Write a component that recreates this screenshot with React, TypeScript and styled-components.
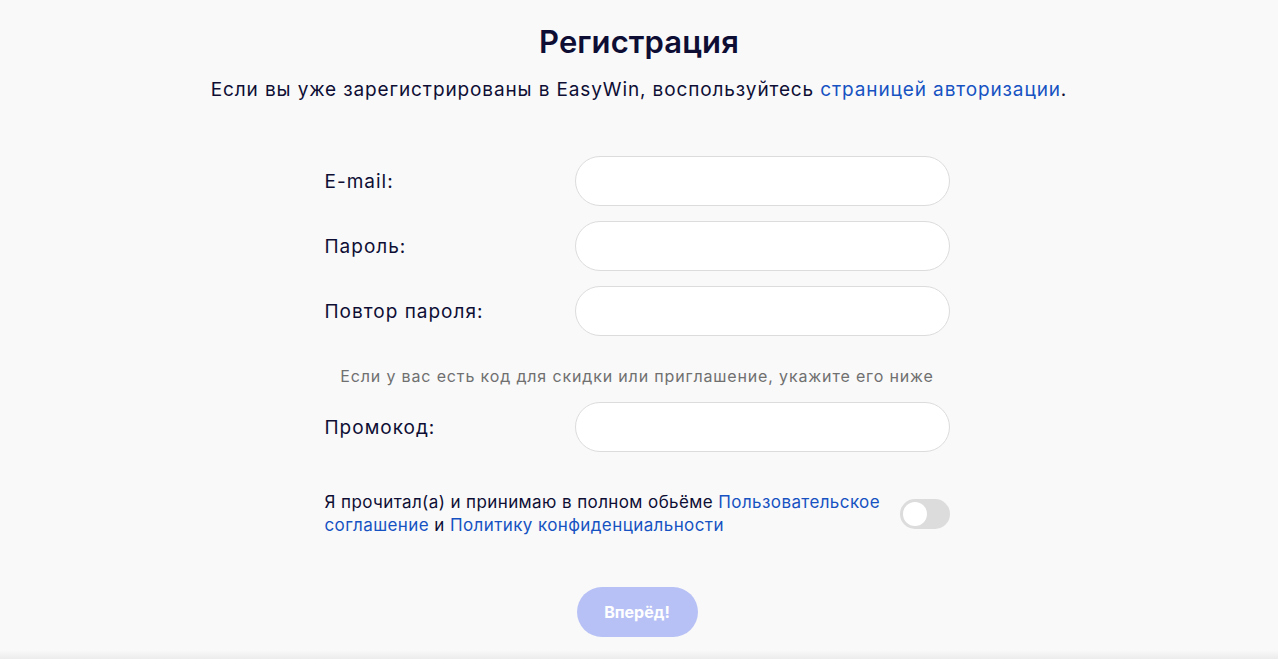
import React, { useState } from 'react'
import styled, { createGlobalStyle } from 'styled-components'

const GlobalStyle = createGlobalStyle`
  html, body {
    margin: 0;
    padding: 0;
    background: #f9f9f9;
  }
  body {
    font-family: Inter, "Noto Sans", sans-serif;
    color: #0e0e35;
  }
`

const Page = styled.div`
  min-height: 659px;
  display: flex;
  flex-direction: column;
  align-items: center;
  padding-top: 22px;
  box-sizing: border-box;
  background: linear-gradient(to bottom, #f9f9f9 0, #f9f9f9 650px, #ececec 659px);
`

const Title = styled.h1`
  margin: 0;
  font-size: 31px;
  font-weight: 600;
  line-height: 40px;
  letter-spacing: 0.1px;
  color: #0e0e35;
`

const Lead = styled.p`
  margin: 15px 0 0;
  font-size: 19px;
  line-height: 26px;
  letter-spacing: 0.88px;
`

const Link = styled.a`
  color: #1652c2;
  text-decoration: none;
  cursor: pointer;
`

const Form = styled.form`
  width: 625px;
  margin: 53px 4px 0 0;
  display: flex;
  flex-direction: column;
  gap: 15px;
`

const Row = styled.label`
  display: grid;
  grid-template-columns: 250px 1fr;
  align-items: center;
  font-size: 19px;
  letter-spacing: 1px;
`

const Input = styled.input`
  height: 50px;
  box-sizing: border-box;
  border: 1px solid #dcdcdc;
  border-radius: 25px;
  background: #fff;
  padding: 0 22px;
  font: inherit;
  outline: none;
`

const Hint = styled.div`
  text-align: center;
  color: #707070;
  font-size: 16px;
  line-height: 21px;
  letter-spacing: 0.85px;
  padding-top: 15px;
`

const Agreement = styled.div`
  display: flex;
  align-items: center;
  justify-content: space-between;
  margin-top: 24px;
  font-size: 17px;
  line-height: 23px;
  letter-spacing: 0.4px;
`

const AgreementText = styled.span`
  flex: 1;
  margin-right: 6px;
`

const Toggle = styled.button<{ $on: boolean }>`
  flex: none;
  width: 50px;
  height: 30px;
  border: none;
  border-radius: 15px;
  padding: 3px;
  background: ${(p) => (p.$on ? '#5b6cf0' : '#dcdcdc')};
  display: flex;
  justify-content: ${(p) => (p.$on ? 'flex-end' : 'flex-start')};
  cursor: pointer;
`

const Knob = styled.span`
  width: 24px;
  height: 24px;
  border-radius: 50%;
  background: #fff;
`

const Submit = styled.button`
  align-self: center;
  margin-top: 35px;
  width: 121px;
  height: 50px;
  border: none;
  border-radius: 25px;
  background: #b7c1f5;
  color: #fff;
  font-family: Inter, "Noto Sans", sans-serif;
  font-size: 16px;
  font-weight: 700;
  cursor: pointer;
`

export default function App() {
  const [agreed, setAgreed] = useState(false)
  return (
    <>
      <GlobalStyle />
      <Page>
        <Title>Регистрация</Title>
        <Lead>
          Если вы уже зарегистрированы в EasyWin, воспользуйтесь{' '}
          <Link>страницей авторизации</Link>.
        </Lead>
        <Form onSubmit={(e) => e.preventDefault()}>
          <Row>
            E-mail:
            <Input type="email" />
          </Row>
          <Row>
            Пароль:
            <Input type="password" />
          </Row>
          <Row>
            Повтор пароля:
            <Input type="password" />
          </Row>
          <Hint>Если у вас есть код для скидки или приглашение, укажите его ниже</Hint>
          <Row>
            Промокод:
            <Input type="text" />
          </Row>
          <Agreement>
            <AgreementText>
              Я прочитал(а) и принимаю в полном обьёме <Link>Пользовательское соглашение</Link> и{' '}
              <Link>Политику конфиденциальности</Link>
            </AgreementText>
            <Toggle type="button" $on={agreed} onClick={() => setAgreed(!agreed)}>
              <Knob />
            </Toggle>
          </Agreement>
          <Submit type="submit" disabled={!agreed}>
            Вперёд!
          </Submit>
        </Form>
      </Page>
    </>
  )
}
